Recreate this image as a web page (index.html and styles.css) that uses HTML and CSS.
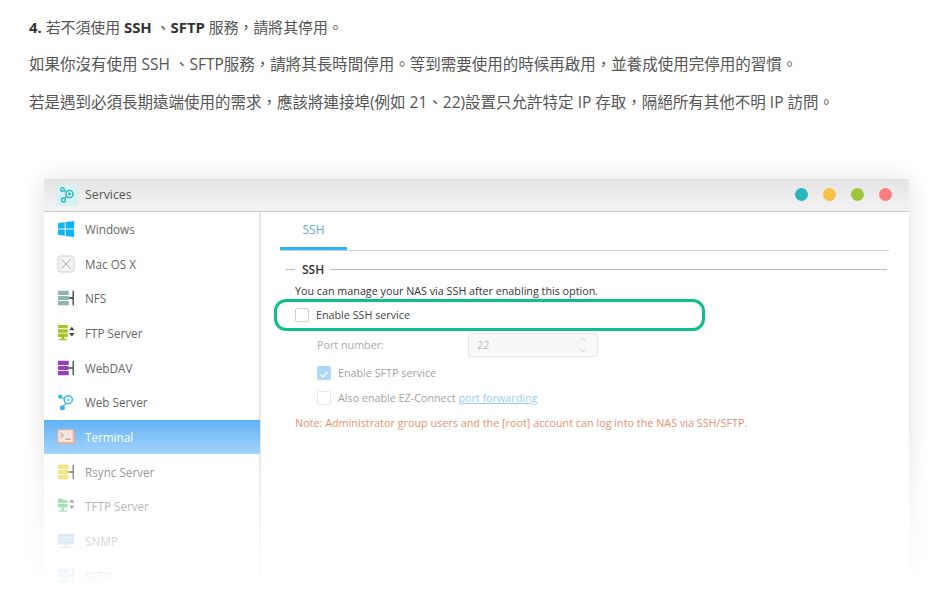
FILE: index.html
```html
<!DOCTYPE html>
<html lang="zh-Hant">
<head>
<meta charset="utf-8">
<title>SSH</title>
<link rel="stylesheet" href="styles.css">
</head>
<body>
<article class="post">
  <p class="para lead"><strong>4.</strong> 若不須使用 <strong>SSH</strong> 、<strong>SFTP</strong> 服務，請將其停用。</p>
  <p class="para">如果你沒有使用 SSH 、SFTP服務，請將其長時間停用。等到需要使用的時候再啟用，並養成使用完停用的習慣。</p>
  <p class="para">若是遇到必須長期遠端使用的需求，應該將連接埠(例如 21、22)設置只允許特定 IP 存取，隔絕所有其他不明 IP 訪問。</p>

  <figure class="win">
    <header class="bar">
      <span class="app-icon">
        <svg viewBox="0 0 22 22" width="22" height="22"><rect width="22" height="22" rx="4" fill="#d6f0f4"/><circle cx="13.5" cy="10" r="3.6" fill="none" stroke="#1fb5b5" stroke-width="1.4"/><circle cx="13.5" cy="10" r="1.4" fill="#1fb5b5"/><circle cx="6.5" cy="5.5" r="1.8" fill="none" stroke="#1fb5b5" stroke-width="1.3"/><circle cx="7.5" cy="16" r="2" fill="none" stroke="#1fb5b5" stroke-width="1.3"/><path d="M8 6.5l2.5 1.5M10.5 12.5L9 14.5" stroke="#1fb5b5" stroke-width="1.3"/></svg>
      </span>
      <span class="bar-title">Services</span>
      <span class="dots"><i class="dot teal"></i><i class="dot amber"></i><i class="dot lime"></i><i class="dot coral"></i></span>
    </header>
    <div class="main">
      <nav class="side">
        <div class="row"><svg class="ic" viewBox="0 0 20 20"><path fill="#0db4f2" d="M1 3.5l7.6-1v7H1zM9.6 2.3L19 1v8.5H9.6zM1 10.5h7.6v7L1 16.500zM9.600 10.500H19V19l-9.400-1.300z"/></svg><span>Windows</span></div>
        <div class="row"><svg class="ic" viewBox="0 0 20 20"><rect x="1" y="1" width="18" height="18" rx="3" fill="#f3f3f3" stroke="#cfcfcf"/><path d="M4.500 4.500l11 11M15.500 4.500l-11 11" stroke="#9a9a9a" stroke-width=".8"/></svg><span>Mac OS X</span></div>
        <div class="row"><svg class="ic" viewBox="0 0 20 20"><path fill="#8fb5ad" d="M1 2h12v4.600H1zM1 7.700h12v4.600H1zM1 13.400h12V18H1z"/><path stroke="#2c3338" stroke-width="1.400" d="M18 2v16M13 10h5"/></svg><span>NFS</span></div>
        <div class="row"><svg class="ic" viewBox="0 0 20 20"><path fill="#a8c22c" d="M1 1h11v3.800H1zM1 5.800h11v3.800H1zM1 10.600h11v3.800H1zM5 14.400h3v2h3V18H2v-1.600h3z"/><path fill="#3d4348" d="M16.500 3l3 4h-6zM13.500 10h6l-3 4z"/></svg><span>FTP Server</span></div>
        <div class="row"><svg class="ic" viewBox="0 0 20 20"><path fill="#9a3dbd" d="M1 2h12v4.600H1zM1 7.700h12v4.600H1zM1 13.400h12V18H1z"/><path stroke="#3d4348" stroke-width="1.400" d="M18 2v16M13 10h5"/></svg><span>WebDAV</span></div>
        <div class="row"><svg class="ic" viewBox="0 0 20 20"><circle cx="12.500" cy="7.500" r="4.500" fill="none" stroke="#2bb8ee" stroke-width="1.600"/><circle cx="12.500" cy="7.500" r="1.800" fill="#8edaf6"/><circle cx="3.500" cy="4" r="2.300" fill="#2bb8ee"/><circle cx="6" cy="16.500" r="2.800" fill="#2bb8ee"/><path d="M5 5l4 1.500M10 11.500l-3 3" stroke="#2bb8ee" stroke-width="1.400"/></svg><span>Web Server</span></div>
        <div class="row active"><svg class="ic" viewBox="0 0 20 20"><rect x="2" y="3" width="18" height="15" fill="#d9a493"/><rect x="1" y="2" width="17" height="14" fill="#f6e0d7" stroke="#dca897"/><path d="M4 5.500l3 2.500-3 2.500M9 12.500h6" fill="none" stroke="#a8705e" stroke-width="1"/></svg><span>Terminal</span></div>
        <div class="row"><svg class="ic" viewBox="0 0 20 20"><path fill="#f8d44e" d="M1 2h12v4.600H1zM1 7.700h12v4.600H1zM1 13.400h12V18H1z"/><path stroke="#3d4348" stroke-width="1.400" d="M18 2v16M13 10h5"/></svg><span>Rsync Server</span></div>
        <div class="row"><svg class="ic" viewBox="0 0 20 20"><path fill="#3fc25a" d="M1 2h5l1.500 1.500H12v3H1zM1 7.500h11v4H1zM5 12h3v3h3v1.500H2V15h3z"/><path fill="#555" d="M16.500 2.500l3 4h-6zM13.500 9.500h6l-3 4z"/></svg><span>TFTP Server</span></div>
        <div class="row"><svg class="ic" viewBox="0 0 20 20"><rect x="1" y="2" width="18" height="12" fill="#8fb4d4"/><path d="M3 6h14M3 9h14" stroke="#d8e6f2"/><path d="M4 17h12M10 14v3" stroke="#777"/></svg><span>SNMP</span></div>
        <div class="row"><svg class="ic" viewBox="0 0 20 20"><path fill="#4ccdf2" d="M1 2h12v4.600H1zM1 7.700h12v4.600H1zM1 13.400h12V18H1z"/><path stroke="#3d4348" stroke-width="1.400" d="M18 2v16M13 10h5"/></svg><span>SFTP</span></div>
      </nav>
      <section class="pane">
        <div class="tabs"><span class="tab">SSH</span></div>
        <div class="legend"><span class="legend-title">SSH</span></div>
        <p class="desc">You can manage your NAS via SSH after enabling this option.</p>
        <div class="enable">
          <label class="check"><i class="box"></i>Enable SSH service</label>
          <span class="highlight"></span>
        </div>
        <div class="sub">
          <div class="port"><span class="port-label">Port number:</span><span class="field">22<svg class="spin" viewBox="0 0 10 20" width="10" height="20"><path d="M2 6l3-3 3 3M2 14l3 3 3-3" fill="none" stroke="#b5b5b5"/></svg></span></div>
          <label class="check sub-row"><i class="box on"><svg viewBox="0 0 14 14" width="14" height="14"><path d="M3 7.500l3 3 5-6" fill="none" stroke="#fff" stroke-width="1.600"/></svg></i>Enable SFTP service</label>
          <label class="check sub-row second"><i class="box"></i><span>Also enable EZ-Connect <a class="link">port forwarding</a></span></label>
        </div>
        <p class="note">Note: Administrator group users and the [root] account can log into the NAS via SSH/SFTP.</p>
      </section>
    </div>
    <div class="fade"></div>
  </figure>
</article>
</body>
</html>
```
FILE: styles.css
```css
* { box-sizing: border-box; }
html, body { margin: 0; height: 100%; background: #fff; overflow: hidden; }
body { font-family: "Open Sans", "Noto Sans CJK TC", sans-serif; }
.post { padding: 16px 29px 0; color: #444; }
.para { margin: 0 0 15.300px; font-size: 15.500px; line-height: 22px; color: #555; white-space: nowrap; }
.lead { font-size: 14.900px; }
.para strong { color: #333; font-weight: 700; }

.win {
  position: relative;
  margin: 66px 0 0 15px;
  width: 865px;
  height: 412px;
  background: #fff;
  box-shadow: 0 0 24px rgba(0,0,0,.12);
  font-size: 12px;
  color: #555;
}
.bar {
  height: 33px;
  display: flex;
  align-items: center;
  padding: 0 17px 0 12px;
  background: linear-gradient(#e4e4e4, #f3f3f3);
  border-bottom: 1.500px solid #c9c9c9;
}
.app-icon { width: 22px; height: 22px; display: flex; }
.bar-title { margin-left: 7px; font-size: 12.300px; color: #555; }
.dots { margin-left: auto; display: flex; gap: 15px; }
.dot { width: 13px; height: 13px; border-radius: 50%; }
.teal { background: #2bb5bd; }
.amber { background: #f7bf45; }
.lime { background: #9fc43c; }
.coral { background: #fb7d80; }

.main { display: flex; height: 379px; }
.side { width: 217px; border-right: 2px solid #e5e5e5; flex: none; }
.row { height: 34.700px; display: flex; align-items: center; padding-left: 13px; gap: 10px; color: #666; }
.ic { width: 18px; height: 18px; flex: none; }
.row span { font-size: 11.700px; }
.active { background: linear-gradient(#5eb0f5, #8ac6fb); color: #fff; margin-right: -1px; }

.pane { flex: 1; padding: 0 20px 0 19px; }
.tabs { height: 39px; border-bottom: 1px solid #cfcfcf; display: flex; }
.tab {
  width: 67px; height: 38px; display: flex; align-items: center; justify-content: center;
  border-bottom: 3px solid #2bb3f3; color: #6fa7cf; font-size: 12px; padding-top: 1px;
}
.legend { margin: 10px 0 0 6px; display: flex; align-items: center; width: 601px; height: 18px; }
.legend::before { content: ""; width: 9px; height: 1px; background: #b9b6c9; }
.legend::after { content: ""; flex: 1; height: 1px; background: #b9b6c9; }
.legend-title { padding: 0 7px 0 7px; font-size: 12px; font-weight: 600; color: #333; }
.desc { margin: 5px 0 0 15px; font-size: 10.750px; line-height: 14px; color: #333; white-space: nowrap; }
.enable { position: relative; margin: 10px 0 0 15px; }
.check { display: flex; align-items: center; height: 14px; font-size: 10.750px; color: #444; gap: 7px; }
.box { width: 14px; height: 14px; border: 1px solid #cfcfcf; border-radius: 2px; background: #fff; flex: none; display: flex; }
.highlight {
  position: absolute; left: -21px; top: -9px; width: 431px; height: 32px;
  border: 3px solid #0cbf8b; border-radius: 12px;
}
.sub { margin-left: 37px; opacity: .5; }
.port { display: flex; align-items: center; margin-top: 11px; height: 24px; font-size: 10.750px; }
.port-label { width: 151px; color: #555; }
.field {
  width: 130px; height: 24px; border: 1px solid #d3d3d3; border-radius: 2px; background: #f2f2f2;
  display: flex; align-items: center; justify-content: space-between; padding: 0 9px 0 8px; color: #777;
}
.spin { flex: none; }
.sub-row { margin-top: 9px; }
.second { margin-top: 11px; }
.box.on { background: #5fb3f3; border-color: #5fb3f3; }
.link { color: #2f9be8; text-decoration: underline; }
.note { margin: 11px 0 0 15px; font-size: 10.800px; line-height: 14px; color: #e58e6c; white-space: nowrap; }

.fade {
  position: absolute; left: -30px; right: -30px; top: 240px; bottom: -30px;
  background: linear-gradient(rgba(255,255,255,0), rgba(255,255,255,.55) 45%, rgba(255,255,255,.97) 82%, #fff);
}
```
